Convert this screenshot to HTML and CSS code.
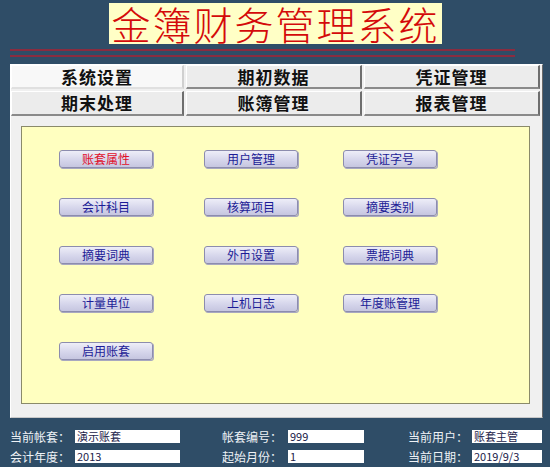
FILE: index.html
```html
<!DOCTYPE html>
<html lang="zh-CN">
<head>
<meta charset="utf-8">
<title>金簿财务管理系统</title>
<link rel="stylesheet" href="styles.css">
</head>
<body>
<div class="header">
  <div class="title">金簿财务管理系统</div>
</div>
<div class="rules">
  <div class="rule"></div>
  <div class="rule"></div>
</div>
<div class="panel">
  <div class="tabs">
    <div class="tab active">系统设置</div>
    <div class="tab">期初数据</div>
    <div class="tab">凭证管理</div>
    <div class="tab">期末处理</div>
    <div class="tab">账簿管理</div>
    <div class="tab">报表管理</div>
  </div>
  <div class="content">
    <div class="btn-grid">
      <div class="btn red">账套属性</div>
      <div class="btn">用户管理</div>
      <div class="btn">凭证字号</div>
      <div class="btn">会计科目</div>
      <div class="btn">核算项目</div>
      <div class="btn">摘要类别</div>
      <div class="btn">摘要词典</div>
      <div class="btn">外币设置</div>
      <div class="btn">票据词典</div>
      <div class="btn">计量单位</div>
      <div class="btn">上机日志</div>
      <div class="btn">年度账管理</div>
      <div class="btn">启用账套</div>
    </div>
  </div>
</div>
<div class="status">
  <div class="lbl">当前帐套：</div><div class="val">演示账套</div><div></div>
  <div class="lbl">帐套编号：</div><div class="val">999</div><div></div>
  <div class="lbl">当前用户：</div><div class="val">账套主管</div>
  <div class="lbl">会计年度：</div><div class="val">2013</div><div></div>
  <div class="lbl">起始月份：</div><div class="val">1</div><div></div>
  <div class="lbl">当前日期：</div><div class="val">2019/9/3</div>
</div>
</body>
</html>
```

FILE: styles.css
```css
html, body {
  margin: 0;
  padding: 0;
}
body {
  width: 550px;
  height: 467px;
  overflow: hidden;
  background: #2f4d67;
  font-family: "Noto Sans CJK SC", "Noto Sans", sans-serif;
}
.header {
  display: flex;
  justify-content: center;
  padding-top: 3px;
}
.title {
  width: 333px;
  height: 41px;
  margin-left: 1px;
  background: #ffffc6;
  color: #d40a0a;
  font-size: 39px;
  font-weight: 300;
  line-height: 41px;
  letter-spacing: 2px;
  text-align: center;
  white-space: nowrap;
}
.rules {
  margin: 5px 0 0 10px;
  width: 505px;
  display: flex;
  flex-direction: column;
  gap: 4px;
}
.rule {
  height: 2px;
  background: #8a2c40;
}
.panel {
  margin: 7px 0 0 10px;
  width: 531px;
  height: 352px;
  background: #f0f0f0;
  border-top: 1px solid #ffffff;
  border-left: 1px solid #ffffff;
  border-right: 1px solid #6a6a6a;
  border-bottom: 1px solid #c8c8c8;
}
.tabs {
  display: grid;
  grid-template-columns: 173px 176px 176px;
  grid-template-rows: 24px 25px;
  column-gap: 2px;
  row-gap: 2px;
  width: 529px;
}
.tab {
  background: #ececec;
  border-top: 1px solid #ffffff;
  border-left: 1px solid #ffffff;
  border-right: 2px solid #6e6e6e;
  border-bottom: 2px solid #8a8a8a;
  font-size: 17px;
  font-weight: bold;
  color: #111111;
  text-align: center;
  line-height: 21px;
  letter-spacing: 1px;
}
.tab.active {
  background: #f8f8f8;
  border-right-color: #d0d0d0;
  border-bottom-color: #e0e0e0;
}
.content {
  margin: 10px 0 0 10px;
  width: 507px;
  height: 276px;
  background: #ffffc0;
  border: 1px solid #8a8a6a;
}
.btn-grid {
  display: grid;
  grid-template-columns: 145px 139px 94px;
  grid-auto-rows: 18px;
  row-gap: 30px;
  padding: 23px 0 0 37px;
}
.btn {
  width: 92px;
  height: 16px;
  border: 1px solid #8c8cae;
  border-radius: 3px;
  background: linear-gradient(#eeeef8, #d4d4ea 60%, #c6c6e0);
  box-shadow: 1px 1px 0 #a8a8c0;
  color: #1c1c96;
  font-size: 12px;
  line-height: 16px;
  text-align: center;
  white-space: nowrap;
}
.btn.red {
  color: #e0102a;
}
.status {
  display: grid;
  grid-template-columns: 65px 105px 42px 66px 76px 44px 64px 70px;
  grid-auto-rows: 13px;
  row-gap: 7px;
  padding: 12px 0 0 10px;
}
.lbl {
  color: #eef2f6;
  font-size: 12px;
  line-height: 13px;
  white-space: nowrap;
}
.val {
  background: #ffffff;
  color: #22224a;
  font-size: 11px;
  line-height: 13px;
  padding-left: 2px;
  white-space: nowrap;
}
```
